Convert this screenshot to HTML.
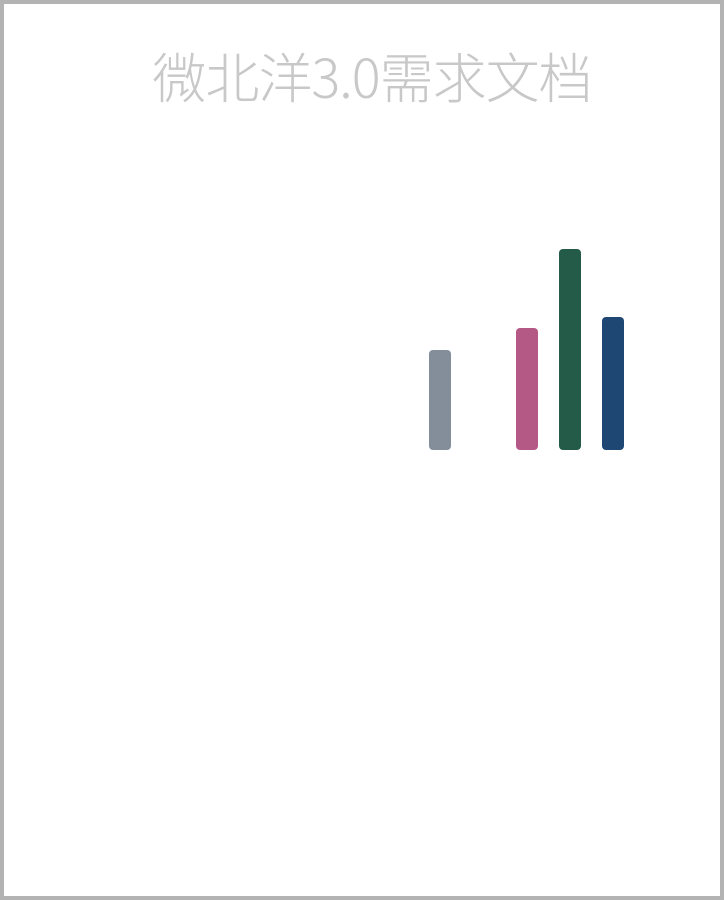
<!DOCTYPE html>
<html><head><meta charset="utf-8"><style>
html,body{margin:0;padding:0;}
body{width:724px;height:900px;position:relative;background:#fff;overflow:hidden;}
.frame{position:absolute;left:0;top:0;width:716px;height:892px;border:4px solid #b3b3b3;}
.t{position:absolute;left:0;width:744px;top:42px;text-align:center;font-family:"Noto Sans CJK SC",sans-serif;font-weight:300;font-size:54px;line-height:66px;color:#c8c8c8;letter-spacing:-1px;}
.b{position:absolute;width:22px;border-radius:4px;}
</style></head><body>
<div class="frame"></div>
<div class="t">微北洋3.0需求文档</div>
<div class="b" style="left:429px;top:350px;height:100px;background:#848e9b"></div>
<div class="b" style="left:516px;top:328px;height:122px;background:#b45886"></div>
<div class="b" style="left:559px;top:249px;height:201px;background:#245b48"></div>
<div class="b" style="left:602px;top:317px;height:133px;background:#1f4774"></div>
</body></html>
